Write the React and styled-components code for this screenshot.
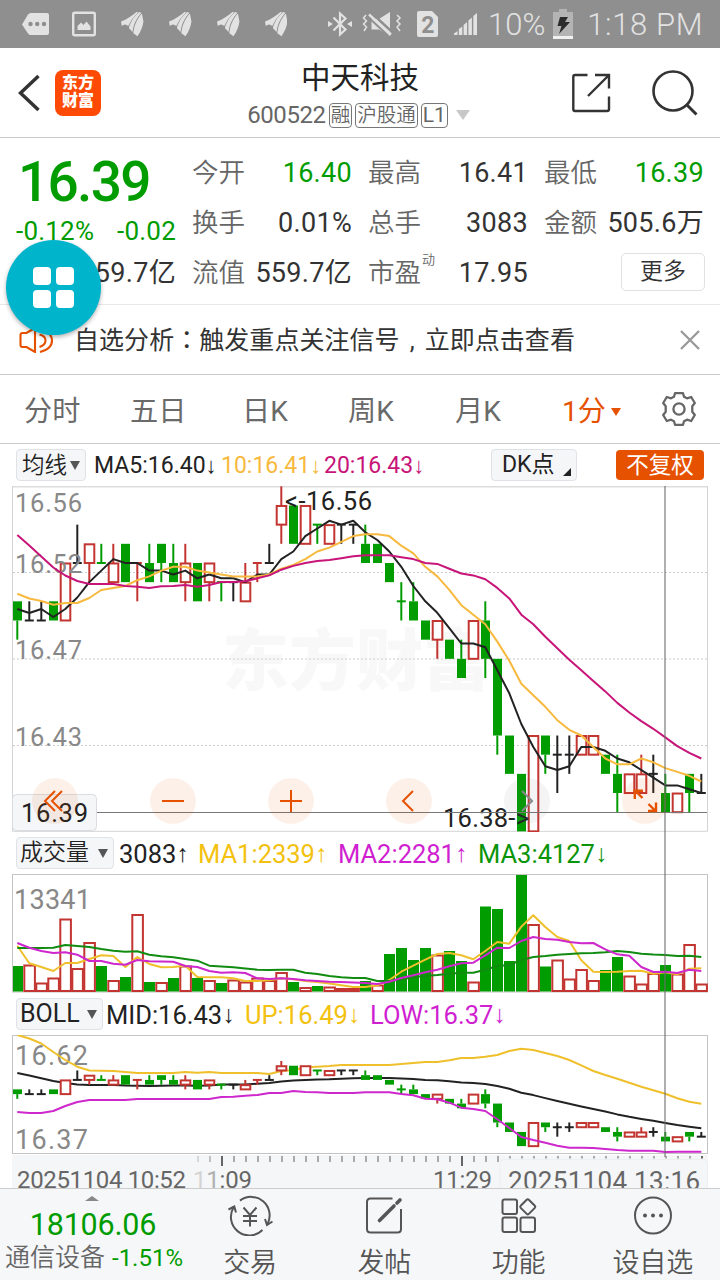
import React from 'react'
import styled, { createGlobalStyle } from 'styled-components'

const GREEN = '#009c00'
const RED = '#c23531'
const BLACK = '#222'
const ORANGE = '#e65100'

const GlobalStyle = createGlobalStyle`
  * { box-sizing: border-box; }
  body {
    margin: 0;
    background: #fff;
    font-family: Roboto, 'Noto Sans CJK SC', sans-serif;
    color: #333;
  }
  svg { display: block; flex: none; }
`

const Page = styled.div`
  position: relative;
  width: 720px;
  height: 1280px;
  overflow: hidden;
  display: flex;
  flex-direction: column;
  background: #fff;
`

const StatusBar = styled.div`
  height: 48px;
  flex: none;
  display: flex;
  align-items: center;
  padding: 0 13px 0 22px;
  background: #8f8f8f;
  color: #e2e2e2;
  font-size: 31px;
  font-weight: 300;
`
const StatusText = styled.span`
  line-height: 48px;
  padding-top: 2px;
  letter-spacing: ${p => p.$ls || 0}px;
  margin-left: ${p => p.$left || 0}px;
`

const Header = styled.header`
  height: 90px;
  flex: none;
  display: flex;
  align-items: center;
  padding: 0 22px 0 18px;
  border-bottom: 1px solid #ccc;
`
const Logo = styled.div`
  width: 46px;
  height: 46px;
  margin-left: 15px;
  border-radius: 8px;
  background: #ff4a06;
  color: #fff;
  font-size: 16px;
  font-weight: 900;
  line-height: 18.5px;
  text-align: center;
  padding-top: 4px;
`
const Heading = styled.div`
  flex: 1;
  display: flex;
  flex-direction: column;
  align-items: center;
  padding-top: 7px;
`
const Title = styled.h1`
  margin: 0 0 0 49px;
  font-size: 29.5px;
  line-height: 38px;
  font-weight: 400;
  color: #222;
`
const Sub = styled.div`
  display: flex;
  align-items: center;
  height: 36px;
  margin-left: 46px;
  color: #666;
  font-size: 24px;
  gap: 3px;
`
const Code = styled.span`
  letter-spacing: -0.4px;
`
const Tag = styled.span`
  height: 25px;
  padding: 0 1px;
  border: 1px solid #777;
  border-radius: 4px;
  font-size: ${p => p.$size || 19.5}px;
  line-height: 23px;
  font-weight: ${p => (p.$size ? 400 : 350)};
`
const Caret = styled.span`
  width: 0;
  height: 0;
  border-left: ${p => p.$w / 2}px solid transparent;
  border-right: ${p => p.$w / 2}px solid transparent;
  border-top: ${p => p.$h}px solid ${p => p.$color || '#555'};
  margin-left: ${p => p.$left || 0}px;
  transform: ${p => (p.$up ? 'rotate(180deg)' : 'none')};
`

const Quote = styled.section`
  height: 167px;
  flex: none;
  display: flex;
  gap: 17px;
  padding: 10px 17px 0 16px;
  border-bottom: 1px solid #e8e8e8;
`
const PriceCol = styled.div`
  width: 159px;
  display: flex;
  flex-direction: column;
`
const Price = styled.div`
  height: 65px;
  padding-left: 2px;
  font-size: 55px;
  line-height: 68px;
  font-weight: 500;
  letter-spacing: -1.7px;
  color: ${GREEN};
`
const Change = styled.div`
  display: flex;
  justify-content: space-between;
  margin-right: -1px;
  font-size: 26px;
  line-height: 36px;
  letter-spacing: 0.2px;
  color: ${GREEN};
`
const Stats = styled.div`
  flex: 1;
  display: grid;
  grid-template-columns: repeat(3, 159px);
  grid-auto-rows: 50px;
  column-gap: 17px;
`
const Stat = styled.div`
  display: flex;
  justify-content: space-between;
  align-items: center;
  line-height: 50px;
`
const StatLabel = styled.span`
  font-size: 26.5px;
  font-weight: 350;
  color: #666;
  white-space: nowrap;
  sup { font-size: 13px; line-height: 0; vertical-align: 18px; margin-left: 1px; }
`
const StatValue = styled.span`
  margin-right: -1px;
  font-size: 27px;
  letter-spacing: 0.3px;
  white-space: nowrap;
  color: ${p => (p.$down ? GREEN : '#333')};
`
const TotalValue = styled(StatValue)`
  text-align: right;
  line-height: 50px;
  margin-top: -1px;
`
const MoreButton = styled.button`
  width: 84px;
  height: 38px;
  margin: -3px -2px 0 auto;
  padding: 0;
  border: 1.5px solid #dfe1e4;
  border-radius: 5px;
  background: #fff;
  color: #333;
  font: 350 23px/34px Roboto, 'Noto Sans CJK SC', sans-serif;
`

const Notice = styled.section`
  height: 70px;
  flex: none;
  display: flex;
  align-items: center;
  padding: 0 20px 0 19px;
  border-bottom: 1px solid #ccc;
`
const NoticeText = styled.p`
  flex: 1;
  margin: 0 0 0 19px;
  font-size: 25px;
  line-height: 50px;
  letter-spacing: 0.05px;
  white-space: nowrap;
`
const Colon = styled.span`
  font-family: 'Noto Sans CJK TC', sans-serif;
`
// the comma sits in the middle of a full-width cell
const Comma = styled.span`
  display: inline-block;
  width: 25px;
  text-align: center;
`

const Tabs = styled.nav`
  height: 69px;
  flex: none;
  display: flex;
  align-items: center;
  padding: 0 24px 0 24px;
  border-bottom: 1px solid #ccc;
`
const Tab = styled.span`
  display: flex;
  align-items: center;
  width: ${p => p.$w}px;
  padding-top: 5px;
  font-size: 28.2px;
  font-weight: 400;
  line-height: 60px;
  color: ${p => (p.$active ? ORANGE : '#6a6a6a')};
`

const Charts = styled.section`
  position: relative;
  height: 744px;
  flex: none;
  padding: 0 12px;
`
const Legend = styled.div`
  height: 42px;
  display: flex;
  align-items: center;
  padding: 0 4px;
  white-space: nowrap;
`
const Picker = styled.button`
  display: flex;
  align-items: center;
  justify-content: space-between;
  width: ${p => p.$w}px;
  height: 32px;
  padding: 0 5px 0 ${p => p.$pl || 4}px;
  border: 1px solid #dfe2e6;
  border-radius: 4px;
  background: #f5f6f8;
  color: #222;
  font: 400 ${p => p.$size || 22}px/30px Roboto, 'Noto Sans CJK SC', sans-serif;
`
const PickerText = styled.span`
  font-weight: ${p => p.$weight || 350};
`
const Corner = styled.span`
  align-self: flex-end;
  width: 0;
  height: 0;
  margin-bottom: 4px;
  border-bottom: 8px solid #222;
  border-left: 8px solid transparent;
`
const Value = styled.span`
  display: flex;
  width: ${p => p.$w}px;
  margin-left: ${p => p.$left}px;
  font-size: ${p => p.$size || 25.5}px;
  line-height: 40px;
  padding-top: 1px;
  color: ${p => p.$color};
`
const Arrow = styled.span`
  font-family: 'Liberation Sans', sans-serif;
  font-size: 0.96em;
`
const Adjust = styled.button`
  width: 88px;
  height: 30px;
  margin-left: auto;
  padding: 0;
  border: 0;
  border-radius: 4px;
  background: ${ORANGE};
  color: #fff;
  font: 400 22.5px/29px Roboto, 'Noto Sans CJK SC', sans-serif;
`
const Crosshair = styled.div`
  position: absolute;
  left: 664px;
  top: 42px;
  width: 2px;
  height: 671px;
  background: rgba(110, 110, 110, 0.55);
`
const Controls = styled.div`
  position: absolute;
  left: 32px;
  top: 334px;
  display: flex;
  gap: 72px;
`
const Control = styled.div`
  width: 46px;
  height: 46px;
  border-radius: 50%;
  background: ${p => (p.$off ? 'rgba(120,120,120,0.08)' : 'rgba(230,81,0,0.085)')};
`

const Bottom = styled.footer`
  flex: 1;
  display: flex;
  border-top: 1px solid #ccc;
  background: #f6f7f9;
`
const Sector = styled.div`
  width: 183px;
  display: flex;
  flex-direction: column;
  align-items: center;
  padding-top: 7px;
`
const SectorIndex = styled.div`
  font-size: 30.5px;
  line-height: 38px;
  margin-top: 5px;
  margin-left: 3px;
  letter-spacing: -0.2px;
  color: ${GREEN};
`
const SectorName = styled.div`
  display: flex;
  font-size: 25px;
  font-weight: 350;
  line-height: 28px;
  gap: 7px;
  margin-left: 5px;
  color: #666;
  white-space: nowrap;
`
const SectorPct = styled.span`
  font-size: 24px;
  font-weight: 400;
  color: ${GREEN};
`
const NavItem = styled.div`
  flex: 1;
  display: flex;
  flex-direction: column;
  align-items: center;
  padding-top: 6px;
  font-size: 27px;
  font-weight: 350;
  line-height: 40px;
  gap: 7px;
  color: #555;
`

const Bubble = styled.div`
  position: absolute;
  left: 6px;
  top: 239.5px;
  width: 95px;
  height: 95px;
  border-radius: 50%;
  background: #00b4cc;
  box-shadow: 0 2px 4px rgba(0, 0, 0, 0.3);
  display: grid;
  grid-template-columns: 18px 18px;
  gap: 5px;
  place-content: center;
`
const Dot = styled.i`
  height: 18px;
  border-radius: 4px;
  background: #fff;
`

// [colour, body top, body bottom, high, low], counted in ticks of 0.01 below 16.56
const candles = [
  ['g', 6, 7, 6, 8], ['k', 7, 7, 6, 7], ['k', 7, 7, 6, 7], ['g', 6, 7, 6, 7], ['r', 4, 7, 4, 7],
  ['k', 4, 4, 2, 4], ['r', 3, 4, 3, 5], ['g', 4, 4, 3, 4], ['r', 4, 5, 3, 5], ['g', 3, 5, 3, 5],
  ['r', 4, 4, 4, 6], ['g', 4, 5, 3, 5], ['g', 3, 4, 3, 5], ['g', 4, 5, 3, 5], ['r', 4, 5, 3, 6],
  ['g', 4, 6, 4, 6], ['r', 4, 5, 4, 6], ['g', 5, 5, 5, 6], ['k', 5, 5, 5, 6], ['r', 5, 6, 4, 6],
  ['r', 4, 4, 4, 5], ['k', 4, 4, 3, 4], ['r', 1, 2, 0, 3], ['g', 1, 3, 1, 3], ['r', 1, 3, 1, 3],
  ['g', 2, 2, 2, 3], ['r', 2, 3, 2, 3], ['k', 2, 2, 2, 3], ['k', 2, 2, 2, 3], ['g', 3, 4, 2, 4],
  ['g', 3, 4, 3, 4], ['g', 4, 5, 4, 5], ['g', 6, 6, 5, 7], ['g', 6, 7, 5, 7], ['g', 7, 8, 7, 8],
  ['r', 7, 8, 7, 9], ['g', 8, 9, 8, 9], ['g', 9, 10, 8, 10], ['r', 7, 9, 7, 9], ['g', 7, 9, 6, 10],
  ['g', 9, 13, 9, 14], ['g', 13, 15, 13, 15], ['g', 15, 18, 15, 18], ['r', 13, 18, 13, 18], ['g', 13, 14, 13, 15],
  ['k', 14, 14, 13, 16], ['k', 14, 14, 13, 15], ['r', 13, 14, 13, 14], ['r', 13, 14, 13, 14], ['g', 14, 15, 14, 15],
  ['g', 15, 16, 14, 17], ['r', 15, 16, 15, 16], ['r', 15, 16, 14, 16], ['k', 15, 15, 14, 16], ['g', 16, 17, 15, 17],
  ['r', 16, 17, 16, 17], ['g', 15, 16, 15, 17], ['k', 16, 16, 15, 16]
]

// top edge of every volume bar
const volumeTops = [
  966, 965, 983, 978, 919, 968.5, 942.5, 966, 980.5, 977, 914.5, 982, 982.5, 978, 966, 978, 980.5, 983, 980, 982,
  978, 980.5, 972.5, 982, 987.5, 986, 987, 988.5, 988.5, 981, 985, 954, 948, 960, 948, 955, 951, 961, 982, 906.5,
  909, 961, 875, 924.5, 966.5, 960, 979, 969.5, 980.5, 970, 957, 976, 984, 973.5, 965, 974, 944.5, 984
]
// bars that are drawn as buying volume though their candle closed down
const volumeUp = [3, 12, 30, 56]

const volumeMa1 = [
  945.7, 963.3, 967, 971, 963, 963, 959, 955.3, 956, 967, 957, 964, 967.3, 967, 965.7, 977, 977.3, 977.3, 978.3, 981,
  981, 980.3, 978.3, 979.3, 981, 982, 983.5, 985.3, 987, 987, 985.3, 980, 971.7, 965.7, 959.7, 954, 953, 955.3, 959.3, 951,
  942, 943.7, 926.7, 915.3, 927, 937, 941, 960.3, 971.7, 972, 971.7, 971, 970.7, 973.7, 972.3, 974.3, 968.7, 968.3
]
const volumeMa2 = [
  943, 947.7, 951, 953, 952.3, 954.7, 961, 961, 963.7, 964.7, 960, 961.3, 961.5, 961.7, 966, 967, 971, 972.7, 972.3, 973,
  978.3, 979, 978.3, 979, 980.3, 981, 981.7, 982, 982.5, 983, 984, 981.7, 978, 975.3, 972.3, 969.7, 966.3, 963.3, 962.7, 955.3,
  947.7, 948, 941, 937, 939, 939.7, 942, 943.3, 943, 949.3, 954.3, 955.7, 967, 972, 971.7, 973, 969.7, 971
]
const volumeMa3 = [
  948, 948, 947.9, 947.7, 945, 946, 947, 949, 950.7, 951.7, 951.3, 954.7, 956.3, 957.3, 959, 960.7, 965.7, 966.5, 967.3, 968.5,
  969.7, 970, 969.8, 969.7, 972.7, 974, 976, 977.3, 978, 978, 981, 981, 979.5, 977, 976, 975, 973.7, 972.7, 972.7, 969.7,
  966, 965, 960, 957, 956, 954.7, 954, 953.3, 953, 952.3, 951, 952, 953.7, 954.5, 955, 956, 955.7, 957
]
const bollUp = [
  1035, 1038.5, 1043.5, 1052, 1060, 1066.7, 1070.5, 1070.8, 1071, 1072, 1073, 1073, 1073, 1073, 1072, 1072.7, 1072, 1073, 1073, 1073,
  1073, 1074, 1071, 1070, 1067.3, 1066.7, 1066, 1065, 1065, 1065, 1065, 1065, 1064, 1063, 1062, 1062, 1060.3, 1058, 1058, 1056.7,
  1055, 1051, 1048.7, 1050, 1053, 1056, 1060, 1065.3, 1071, 1075, 1078.7, 1082.7, 1086.7, 1090.3, 1093.7, 1098.3, 1101.7, 1103.7
]
const bollLow = [
  1112, 1113, 1113, 1111, 1106, 1102, 1100, 1100, 1100, 1100, 1099, 1099, 1099, 1099, 1099, 1099, 1099, 1097, 1096.7, 1095.7,
  1095, 1093, 1093, 1091, 1092, 1092.3, 1093, 1093, 1093, 1092.3, 1092.3, 1092.3, 1094, 1095.3, 1098.7, 1099.3, 1102.7, 1107.7, 1109, 1111,
  1119.3, 1128, 1137, 1140, 1142.7, 1145.7, 1147.7, 1147.8, 1148, 1149, 1150, 1150.7, 1150.7, 1150.7, 1152, 1151.7, 1151.7, 1151.7
]

const xAt = i => 17.3 + i * 12
const priceY = tick => 486.3 + tick * 19.17
const bollY = tick => 1061 + tick * 4.73

const closes = candles.map(([c, top, bottom]) => (c === 'g' ? bottom : top))

// averages need earlier candles than those shown, so the head of each line is given
const average = (n, head) =>
  closes.map((_, i) => {
    if (i < head.length) return (head[i] - 486.3) / 19.17
    return closes.slice(i - n + 1, i + 1).reduce((a, b) => a + b, 0) / n
  })

const ma5 = average(5, [609, 613, 609, 617])
const ma10 = average(10, [593.7, 598.5, 601, 604.7, 603, 603, 598, 590, 588])
const ma20 = average(20, [
  535, 545.5, 556.5, 567.5, 575.5, 581, 584, 584, 584, 586, 586.7, 588, 586.3, 586, 585, 586.7, 585, 582, 582
])

const Line = ({ ys, color, w = 2 }) => (
  <polyline
    fill="none"
    stroke={color}
    strokeWidth={w}
    strokeLinejoin="round"
    points={ys.map((y, i) => `${xAt(i)},${y.toFixed(1)}`).join(' ')}
  />
)

const Candles = ({ y, w = 2 }) => candles.map(([c, top, bottom, high, low], i) => {
  const color = { g: GREEN, r: RED, k: BLACK }[c]
  const x = xAt(i)
  const flat = top === bottom
  return (
    <g key={i} stroke={color} strokeWidth={w}>
      {high < top && <line x1={x} x2={x} y1={y(high)} y2={y(top)} />}
      {low > bottom && <line x1={x} x2={x} y1={y(bottom)} y2={y(low)} />}
      {flat && <line x1={x - 4.5} x2={x + 4.5} y1={y(top)} y2={y(top)} />}
      {!flat && c === 'g' &&
        <rect x={x - 4.3} y={y(top)} width={9} height={y(bottom) - y(top)} fill={color} stroke="none" />
      }
      {!flat && c === 'r' &&
        <rect x={x - 4.6} y={y(top) + 0.5} width={9.6} height={y(bottom) - y(top) - 0.5} fill="#fff" />
      }
    </g>
  )
})

const ChartText = ({ x, y, w, size = 25.5, fill = '#888', children }) => (
  <text x={x} y={y} fontSize={size} fill={fill} textLength={w}>{children}</text>
)

const PriceChart = () => (
  <svg width="696" height="346" viewBox="12 486 696 346">
    <text x="222" y="685" fontSize="67" fontWeight="900" fill="#f8f8f8">东方财富</text>
    {[572.5, 659, 745.5].map(y => (
      <line key={y} x1="13" x2="707" y1={y} y2={y} stroke="#ccc" strokeDasharray="2 2" />
    ))}
    <path d="M12 486.5H708" stroke="#ddd" strokeWidth="2" />
    <path d="M12.5 486V831.3H707.5V486" fill="none" stroke="#d4d4d4" />
    <Candles y={priceY} />
    <ChartText x={15} y={511.7} w={67}>16.56</ChartText>
    <ChartText x={15} y={573} w={67}>16.52</ChartText>
    <ChartText x={15} y={659} w={67}>16.47</ChartText>
    <ChartText x={15} y={746} w={67}>16.43</ChartText>
    <Line ys={ma5.map(priceY)} color={BLACK} />
    <Line ys={ma10.map(priceY)} color="#f7b93e" />
    <Line ys={ma20.map(priceY)} color="#c71579" />
    <ChartText x={285} y={510} w={87} fill="#222">{'<-16.56'}</ChartText>
    <ChartText x={443} y={827} w={86} fill="#222">{'16.38->'}</ChartText>
    <line x1="97" x2="707" y1="812.5" y2="812.5" stroke="#777" />
    <rect x="12.5" y="794.5" width="84" height="36" rx="4" fill="#f5f6f8" stroke="#d9dce0" />
    <ChartText x={21} y={821.7} w={67} fill="#222">16.39</ChartText>
  </svg>
)

const VolumeBar = ({ i, top }) => {
  const down = candles[i][0] === 'g' && !volumeUp.includes(i)
  const left = Math.max(xAt(i) - (down ? 5.3 : 5), 13)
  if (down) {
    return <rect x={left} y={top} width={xAt(i) + 5.7 - left} height={991.5 - top} fill={GREEN} />
  }
  return (
    <rect x={left} y={top + 0.5} width={10.6} height={990.5 - top} fill="#fff" stroke={RED} strokeWidth="2" />
  )
}

const VolumeChart = () => (
  <svg width="696" height="119" viewBox="12 874 696 119">
    <rect x="12.5" y="874.5" width="695" height="117.5" fill="none" stroke="#c4c4c4" />
    <ChartText x={14} y={908.5} w={77} size={27}>13341</ChartText>
    {volumeTops.map((top, i) => <VolumeBar key={i} i={i} top={top} />)}
    <Line ys={volumeMa1} color="#efc02c" />
    <Line ys={volumeMa3} color="#118c11" />
    <Line ys={volumeMa2} color="#cd27cd" />
  </svg>
)

const BollChart = () => (
  <svg width="696" height="120" viewBox="12 1035 696 120">
    <rect x="12.5" y="1035.5" width="695" height="118" fill="none" stroke="#c4c4c4" />
    <ChartText x={15} y={1065} w={73} size={27}>16.62</ChartText>
    <ChartText x={15} y={1149} w={73} size={27}>16.37</ChartText>
    <Line ys={bollUp} color="#efc02c" />
    <Line ys={ma20.map(bollY)} color={BLACK} />
    <Candles y={bollY} />
    <Line ys={bollLow} color="#cd27cd" />
  </svg>
)

const TimeAxis = () => (
  <svg width="696" height="33" viewBox="12 1155 696 33">
    <rect x="12" y="1155" width="696" height="33" fill="#f5f6f8" />
    {Array.from({ length: 43 }, (_, i) => {
      const major = i === 2 || i === 22
      return (
        <line
          key={i}
          x1={198 + i * 12}
          x2={198 + i * 12}
          y1="1156"
          y2={major ? 1166 : i > 25 ? 1158.5 : 1162}
          stroke={major || i === 42 ? '#666' : '#aaa'}
          strokeWidth="2"
          opacity={i === 0 ? 0.4 : i === 1 ? 0.7 : 1}
        />
      )
    })}
    <ChartText x={17} y={1188} w={169} size={24} fill="#666">20251104 10:52</ChartText>
    <ChartText x={193} y={1188} w={59} size={24} fill="#666">
      <tspan fill="#d4d4d4">1</tspan><tspan fill="#b0b0b0">1</tspan>:09
    </ChartText>
    <ChartText x={433} y={1188} w={59} size={24} fill="#666">11:29</ChartText>
    <rect x="500" y="1159.5" width="207.5" height="34" rx="4" fill="#f5f6f8" stroke="#eceef0" />
    <ChartText x={508} y={1189.5} w={192} size={26} fill="#666">20251104 13:16</ChartText>
  </svg>
)

const StatusIcons = () => (
  <svg width="265" height="48" viewBox="22 0 265 48" fill="#e2e2e2">
    <path d="M22 24.500 L28 14.500 Q29 13 31 13 H47 Q49 13 49 15 V33 Q49 35 47 35 H31 Q29 35 28 33.500 Z" />
    <g fill="#8f8f8f"><circle cx="30.500" cy="24" r="2.200" /><circle cx="37.200" cy="24" r="2.200" /><circle cx="44" cy="24" r="2.200" /></g>
    <rect x="73.200" y="12.700" width="21.600" height="22.600" rx="1.500" fill="none" stroke="#e2e2e2" strokeWidth="2.400" />
    <path d="M77.500 30 V26 L81 22.500 L83.500 25 L86.500 21.500 L90.500 26.500 V30 Z" />
    {[121, 169, 217, 265].map(x => (
      <g key={x} transform={`translate(${x} 12)`}>
        <path d="M0 9.500 C6 7.500 11 3.500 15.500 0 L17.200 .2 C12.500 5 9.500 9 7.300 14 C5 12 3 12 .8 14 Z" />
        <path d="M18.300 0 L20.300 .8 C15.500 6.500 12.500 12 11.500 20 L7.900 16 C9.500 9.500 13.500 4 18.300 0 Z" />
        <path d="M20.900 1.600 L22.400 9.500 C22 14 20 19 16.500 24.300 L12.300 21.300 C13 13.500 16 7 20.900 1.600 Z" />
      </g>
    ))}
  </svg>
)

const SystemIcons = () => (
  <svg width="152" height="48" viewBox="328 0 152 48" fill="#e2e2e2">
    <path d="M333.500 17.500 L345.500 29.500 L340 34.500 V13.500 L345.500 18.500 L333.500 30.500" fill="none" stroke="#e2e2e2" strokeWidth="2.200" />
    <path d="M328 21 L333 24 L328 27 Z M352 21 L347 24 L352 27 Z" />
    <path d="M371.500 19 H379 L390 12 V36 L379 29.500 H371.500 Z" />
    <path d="M370.500 12 L392 32" stroke="#8f8f8f" strokeWidth="2.500" />
    <path d="M369 14.500 L391 34.500" stroke="#e2e2e2" strokeWidth="2.400" />
    <path d="M368 17 L388 35.500" stroke="#8f8f8f" strokeWidth="1.800" />
    <path d="M366 15 L363.500 18 L366.500 21 L363.500 24 L366.500 27 L364 31 M397 15 L400 18 L397 21 L400 24 L397 27 L400 31" fill="none" stroke="#e2e2e2" strokeWidth="1.500" />
    <path d="M417 13 Q417 11 419 11 H432 L438 17 V35 Q438 37 436 37 H419 Q417 37 417 35 Z" />
    <text x="421.200" y="33" fontSize="23" fontWeight="700" fill="#8f8f8f">2</text>
    <path d="M454 35 V33.500 L457.500 31 V35 Z M458.800 35 V29 L462.300 26.500 V35 Z M463.600 35 V25 L467.100 22 V35 Z M468.400 35 V20.500 L471.900 17.500 V35 Z M473.300 35 V16 L477 13 V35 Z" />
  </svg>
)

const Battery = () => (
  <svg width="20" height="30" viewBox="0 0 20 30">
    <path d="M0 3 H6 V0 H14 V3 H20 V27 H0 Z" fill="#b4b4b4" />
    <path d="M0 27 H20 V30 H0 Z" fill="#f0f0f0" />
    <path d="M7 8 H15 L12 13 H17 L6 25 L8.500 17 H4.500 Z" fill="#2c2c2c" />
  </svg>
)

const HeaderIcons = () => (
  <svg width="128" height="50" viewBox="570 68 128 50" fill="none" stroke="#333" strokeWidth="2.400">
    <path d="M587.500 75 H575 Q573.300 75 573.300 77 V109 Q573.300 111 575 111 H607 Q609 111 609 109 V96.500" />
    <path d="M595 75 H609 V88.500 M609 75 L588 96" />
    <circle cx="673" cy="91" r="19.500" strokeWidth="2.600" />
    <path d="M687 105 L696.500 114.500" strokeWidth="3" />
  </svg>
)

const Speaker = () => (
  <svg width="36" height="26" viewBox="0 0 36 26" fill="none" stroke={ORANGE} strokeWidth="2.100">
    <path d="M16 1 L7.500 6 H3.500 Q1.500 6 1.500 8 V18 Q1.500 20 3.500 20 H7.500 L16 25 Z" />
    <path d="M20.500 7.500 Q26.500 9 26.500 13.500 Q26.500 18 20.500 20 M25.500 3 Q33 7 33 13.500 Q33 22 21 25" />
  </svg>
)

const Gear = () => (
  <svg width="34" height="34" viewBox="-17 -17 34 34" fill="none" stroke="#666" strokeWidth="2.300" strokeLinejoin="round">
    <circle r="5.600" />
    <path d="M-4 -15.800 H4 L5 -12.200 L8 -10.700 L12.200 -12 L15.800 -6 L13.300 -2.800 V2.800 L15.800 6 L12.200 12 L8 10.700 L5 12.200 L4 15.800 H-4 L-5 12.200 L-8 10.700 L-12.200 12 L-15.800 6 L-13.300 2.800 V-2.800 L-15.800 -6 L-12.200 -12 L-8 -10.700 L-5 -12.200 Z" />
  </svg>
)

const controls = [
  { d: 'M23 13 L13 23 L23 33 M30 13 L20 23 L30 33' },
  { d: 'M12 23 H34' },
  { d: 'M12 23 H34 M23 12 V34' },
  { d: 'M27 13 L17 23 L27 33' },
  { d: 'M18 13 L28 23 L18 33', off: true },
  { d: 'M20.500 20 L13.500 13 M12.800 21 V12.800 H21 M26.500 26 L33 32.500 M34 24.500 V33 H26', w: 2.4 }
]

const navItems = [
  {
    label: '交易',
    icon: (
      <g>
        <path d="M13 5.600 A18.500 18.500 0 0 1 40.500 29 M35.500 35 A18.500 18.500 0 0 1 6.800 12" />
        <path d="M1.500 14.500 L7.300 11.500 L9 17.500 M45.500 26.500 L40 30 L38 24" />
        <path d="M16.500 12.500 L23 20 L29.500 12.500 M23 20 V31.500 M16 21 H30 M16 26 H30" />
      </g>
    )
  },
  {
    label: '发帖',
    icon: (
      <g transform="translate(1.500)">
        <path d="M30 3.500 H8 Q4.500 3.500 4.500 7 V34 Q4.500 37.500 8 37.500 H35 Q38.500 37.500 38.500 34 V14" />
        <path d="M17 25.500 L31.500 11 M34.500 8 L37.500 5" strokeWidth="3.600" strokeLinecap="round" />
      </g>
    )
  },
  {
    label: '功能',
    icon: (
      <g transform="translate(1.500)">
        <rect x="5" y="4.500" width="14.500" height="14.500" rx="2" />
        <rect x="5" y="22.500" width="14.500" height="14.500" rx="2" />
        <rect x="23" y="22.500" width="14.500" height="14.500" rx="2" />
        <rect x="24.500" y="6" width="11.500" height="11.500" rx="1.500" transform="rotate(45 30.200 11.800)" />
      </g>
    )
  },
  {
    label: '设自选',
    icon: (
      <g transform="translate(1.500)">
        <circle cx="21.500" cy="20.500" r="18" />
        <g fill="#555" stroke="none">
          <circle cx="13.500" cy="20.500" r="2" /><circle cx="21.500" cy="20.500" r="2" /><circle cx="29.500" cy="20.500" r="2" />
        </g>
      </g>
    )
  }
]

const stats = [
  { label: '今开', value: '16.40', down: true },
  { label: '最高', value: '16.41' },
  { label: '最低', value: '16.39', down: true },
  { label: '换手', value: '0.01%' },
  { label: '总手', value: '3083' },
  { label: '金额', value: '505.6万' },
  { label: '流值', value: '559.7亿' },
  { label: '市盈', value: '17.95', sup: '动' }
]

export default function App () {
  return (
    <Page>
      <GlobalStyle />
      <StatusBar>
        <StatusIcons />
        <svg width="41" height="1" />
        <SystemIcons />
        <StatusText $left={8}>10%</StatusText>
        <svg width="8" height="1" />
        <Battery />
        <StatusText $left={14} $ls={0.6}>1:18 PM</StatusText>
      </StatusBar>

      <Header>
        <svg width="22" height="38" viewBox="0 0 22 38" fill="none" stroke="#333" strokeWidth="3.500">
          <path d="M20.500 2 L2.500 19 L20.500 36" />
        </svg>
        <Logo>东方<br />财富</Logo>
        <Heading>
          <Title>中天科技</Title>
          <Sub>
            <Code>600522</Code>
            <Tag>融</Tag>
            <Tag>沪股通</Tag>
            <Tag $size={21}>L1</Tag>
            <Caret $w={15} $h={10} $color="#c8c8c8" $left={5} />
          </Sub>
        </Heading>
        <HeaderIcons />
      </Header>

      <Quote>
        <PriceCol>
          <Price>16.39</Price>
          <Change><span>-0.12%</span><span>-0.02</span></Change>
          <TotalValue>559.7亿</TotalValue>
        </PriceCol>
        <Stats>
          {stats.map(s => (
            <Stat key={s.label}>
              <StatLabel>{s.label}{s.sup && <sup>{s.sup}</sup>}</StatLabel>
              <StatValue $down={s.down}>{s.value}</StatValue>
            </Stat>
          ))}
          <Stat><MoreButton>更多</MoreButton></Stat>
        </Stats>
      </Quote>

      <Notice>
        <Speaker />
        <NoticeText>自选分析<Colon>：</Colon>触发重点关注信号<Comma>,</Comma>立即点击查看</NoticeText>
        <svg width="20" height="20" viewBox="0 0 20 20" stroke="#999" strokeWidth="2.300">
          <path d="M1 1 L19 19 M19 1 L1 19" />
        </svg>
      </Notice>

      <Tabs>
        <Tab $w={106}>分时</Tab>
        <Tab $w={112}>五日</Tab>
        <Tab $w={106}>日K</Tab>
        <Tab $w={107}>周K</Tab>
        <Tab $w={107}>月K</Tab>
        <Tab $w={100} $active>1分<Caret $w={10} $h={8} $color={ORANGE} $left={5} /></Tab>
        <Gear />
      </Tabs>

      <Charts>
        <Legend>
          <Picker $w={70} $pl={5} $size={22.5}><PickerText>均线</PickerText><Caret $w={10} $h={9} /></Picker>
          <Value $left={8} $w={127} $size={23} $color={BLACK}>MA5:16.40<Arrow>↓</Arrow></Value>
          <Value $left={0} $w={103} $size={23} $color="#f7b93e">10:16.41<Arrow>↓</Arrow></Value>
          <Value $left={0} $w={108} $size={23} $color="#c71579">20:16.43<Arrow>↓</Arrow></Value>
          <svg width="59" height="1" />
          <Picker $w={86} $pl={10} $size={23}><PickerText $weight={400}>DK点</PickerText><Corner /></Picker>
          <Adjust>不复权</Adjust>
        </Legend>
        <PriceChart />
        <Legend>
          <Picker $w={98} $pl={3} $size={23}><PickerText>成交量</PickerText><Caret $w={10} $h={9} /></Picker>
          <Value $left={5} $w={79} $color={BLACK}>3083<Arrow>↑</Arrow></Value>
          <Value $left={0} $w={140} $color="#f3c10f">MA1:2339<Arrow>↑</Arrow></Value>
          <Value $left={0} $w={140} $color="#d01fd0">MA2:2281<Arrow>↑</Arrow></Value>
          <Value $left={0} $w={140} $color="#0a940a">MA3:4127<Arrow>↓</Arrow></Value>
        </Legend>
        <VolumeChart />
        <Legend>
          <Picker $w={87} $pl={3} $size={25}><PickerText $weight={400}>BOLL</PickerText><Caret $w={10} $h={9} /></Picker>
          <Value $left={3} $w={139} $color={BLACK}>MID:16.43<Arrow>↓</Arrow></Value>
          <Value $left={0} $w={125} $color="#f3c10f">UP:16.49<Arrow>↓</Arrow></Value>
          <Value $left={0} $w={140} $color="#d01fd0">LOW:16.37<Arrow>↓</Arrow></Value>
        </Legend>
        <BollChart />
        <TimeAxis />
        <Crosshair />
        <Controls>
          {controls.map(c => (
            <Control key={c.d} $off={c.off}>
              <svg width="46" height="46" fill="none" stroke={c.off ? '#888' : ORANGE} strokeWidth={c.w || 2}><path d={c.d} /></svg>
            </Control>
          ))}
        </Controls>
      </Charts>

      <Bottom>
        <Sector>
          <Caret $w={14} $h={5} $color="#888" $up />
          <SectorIndex>18106.06</SectorIndex>
          <SectorName>通信设备<SectorPct>-1.51%</SectorPct></SectorName>
        </Sector>
        {navItems.map(item => (
          <NavItem key={item.label}>
            <svg width="46" height="41" fill="none" stroke="#555" strokeWidth="2">{item.icon}</svg>
            {item.label}
          </NavItem>
        ))}
      </Bottom>

      <Bubble><Dot /><Dot /><Dot /><Dot /></Bubble>
    </Page>
  )
}
